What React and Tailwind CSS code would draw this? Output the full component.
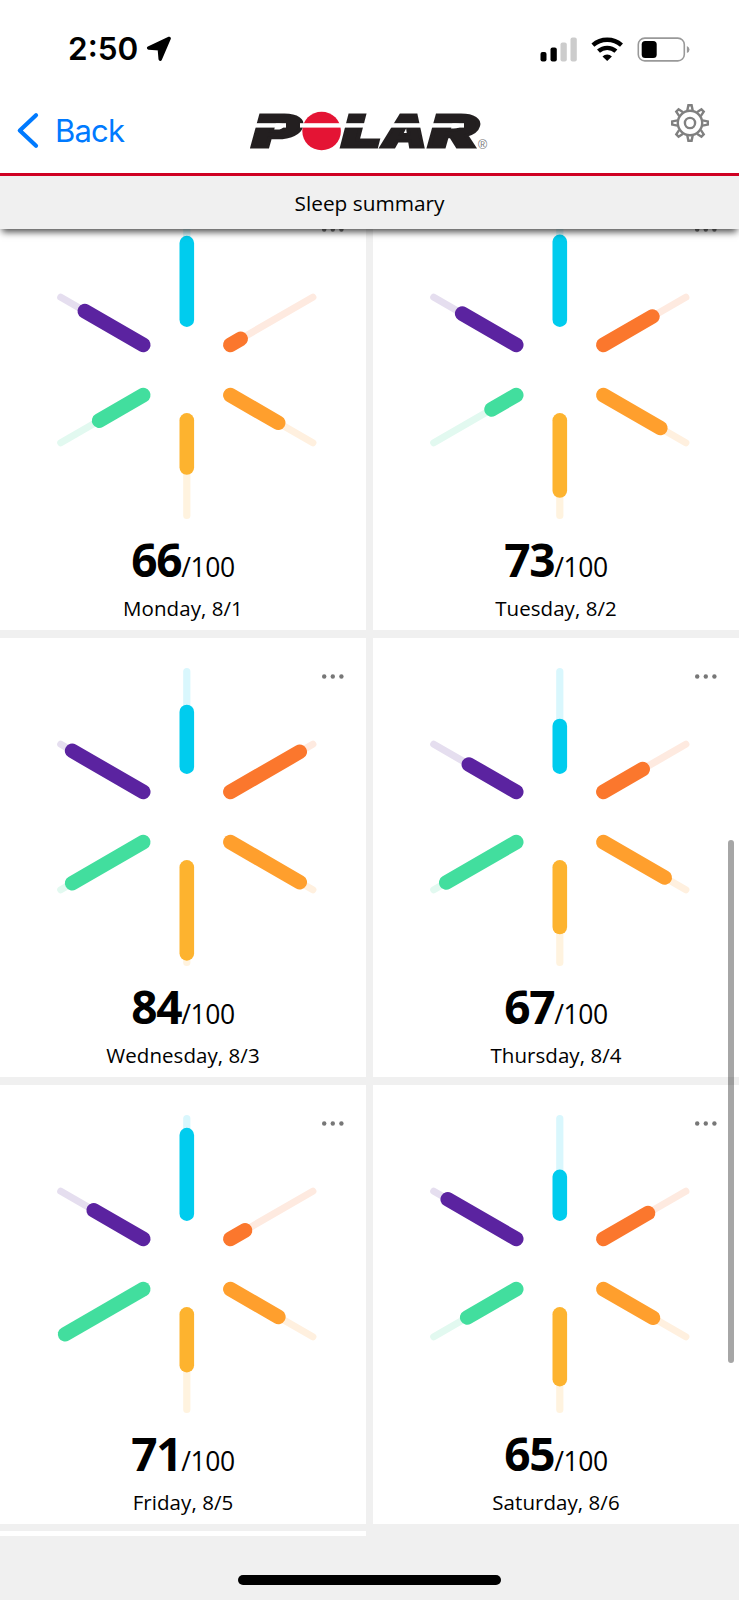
const SPOKES = [
  { angle: -90, color: "#00ccee", track: "#d9f7fd" },
  { angle: -30, color: "#fb772d", track: "#feeae0" },
  { angle: 30, color: "#ff9f2d", track: "#fff0df" },
  { angle: 90, color: "#fdb32f", track: "#fff3df" },
  { angle: 150, color: "#42de9e", track: "#e2f9f0" },
  { angle: 210, color: "#5b23a0", track: "#e5deef" },
];

// reach = how far each spoke is filled, clockwise from the top
const days = [
  { score: 66, label: "Monday, 8/1", reach: [126.9, 62.2, 105.5, 97.5, 101.2, 117.8] },
  { score: 73, label: "Tuesday, 8/2", reach: [128.2, 106.9, 116.1, 120.5, 78.8, 112.7] },
  { score: 84, label: "Wednesday, 8/3", reach: [105, 130.4, 130.4, 136.4, 132.4, 132.4] },
  { score: 67, label: "Thursday, 8/4", reach: [91, 95.7, 121.1, 110, 131.1, 105] },
  { score: 71, label: "Friday, 8/5", reach: [128.9, 67.3, 105.7, 101.2, 140.5, 107.5] },
  { score: 65, label: "Saturday, 8/6", reach: [87.2, 101.9, 107.6, 115.2, 106.9, 129.4] },
];

const SleepStar = ({ reach }) => (
  <svg className="block w-[366px] h-[337px]" viewBox="0 0 366 337">
    <g transform="translate(186.8 179)" strokeLinecap="round">
      {SPOKES.map((s, i) => (
        <g key={s.angle} transform={`rotate(${s.angle})`}>
          <line x1="60" x2={reach[i] > 140 ? 138 : 145.5} y1="0" y2="0" stroke={s.track} strokeWidth="7.2" />
          <line x1="50.3" x2={reach[i]} y1="0" y2="0" stroke={s.color} strokeWidth="14.6" />
        </g>
      ))}
    </g>
    <g fill="#777777">
      <circle cx="324.2" cy="38.5" r="2.2" />
      <circle cx="332.8" cy="38.5" r="2.2" />
      <circle cx="341.4" cy="38.5" r="2.2" />
    </g>
  </svg>
);

const DayCard = ({ day }) => (
  <div className="bg-white flex flex-col items-center overflow-hidden">
    <SleepStar reach={day.reach} />
    <div className="flex items-baseline h-[62px] leading-[62px] text-black">
      <span className="text-[46px] font-bold tracking-[-1.3px]">{day.score}</span>
      <span className="text-[26.5px] tracking-[-0.4px]">/100</span>
    </div>
    <div className="pt-[2px] text-[20.5px] leading-[32px] tracking-[0.06px] text-black">{day.label}</div>
  </div>
);

const StatusBar = () => (
  <div className="flex items-center justify-between h-[98px] pl-[68px] pr-[49px]">
    <div className="flex items-center gap-[8px] font-['Inter',sans-serif]">
      <span className="text-[31.5px] leading-[38px] font-semibold text-black">2:50</span>
      <svg className="w-[26px] h-[26px]" viewBox="0 0 26 26">
        <path d="M23.2 2.4 14.2 23.2 13.3 12.9 2.6 12Z" fill="#000" stroke="#000" strokeWidth="3.4" strokeLinejoin="round" />
      </svg>
    </div>
    <div className="flex items-center gap-[14px]">
      <svg className="w-[38px] h-[25px]" viewBox="0 0 38 25">
        <rect x="1.5" y="15" width="6" height="9.5" rx="2" fill="#000" />
        <rect x="11.5" y="10.5" width="6.3" height="14" rx="2" fill="#000" />
        <rect x="21.5" y="5.5" width="6.3" height="19" rx="2" fill="#ccc" />
        <rect x="31.5" y="0.5" width="6.3" height="24" rx="2" fill="#ccc" />
      </svg>
      <svg className="w-[32px] h-[25px]" viewBox="0 0 32 25" fill="none" stroke="#000" strokeWidth="4.4">
        <path d="M1.9 8.2Q8 2.8 16.2 2.8T30.5 8.2" />
        <path d="M7.5 14.2Q11.2 10.9 16.2 10.9T24.9 14.2" />
        <path d="M16.2 24.1 11.5 19.4Q13.4 17.4 16.2 17.4T20.9 19.4Z" fill="#000" stroke="none" />
      </svg>
      <svg className="w-[53px] h-[25px]" viewBox="0 0 53 25">
        <rect x="1.3" y="1.1" width="46" height="22.8" rx="6.5" fill="none" stroke="#999" strokeWidth="1.6" />
        <rect x="4.7" y="4" width="15" height="17" rx="3.5" fill="#000" />
        <path d="M49.9 8.9Q52.5 10 52.5 12.5T49.9 16.1Z" fill="#999" />
      </svg>
    </div>
  </div>
);

const PolarLogo = () => (
  <svg className="block w-[248px] h-[60px]" viewBox="246 101 248 60">
    <g fill="#231f20" stroke="#231f20" strokeWidth="2.8" className="font-['Inter',sans-serif] font-black italic" fontSize="44.5">
      <text x="252.5" y="146.7" textLength="48" lengthAdjust="spacingAndGlyphs">P</text>
      <text x="342" y="146.7" textLength="39" lengthAdjust="spacingAndGlyphs">L</text>
      <text x="382.5" y="146.7" textLength="44" lengthAdjust="spacingAndGlyphs">A</text>
      <text x="429" y="146.7" textLength="49" lengthAdjust="spacingAndGlyphs">R</text>
    </g>
    <circle cx="321.6" cy="131" r="19.3" fill="#e41434" />
    <g fill="#fff">
      <rect x="252" y="123.2" width="34" height="4.4" />
      <rect x="300" y="123.2" width="43" height="4.4" />
      <rect x="344" y="123.2" width="83" height="4.4" />
      <rect x="430" y="123.2" width="34" height="4.4" />
    </g>
    <text x="478" y="148.6" fontSize="12.5" fill="#777" className="font-['Liberation_Sans',sans-serif]">®</text>
  </svg>
);

const Gear = () => (
  <svg className="w-[40px] h-[40px]" viewBox="-20 -20 40 40" fill="none" stroke="#808080" strokeWidth="2.4">
    <circle r="12.2" />
    <circle r="5.1" />
    {[0, 45, 90, 135, 180, 225, 270, 315].map((a) => (
      <path key={a} transform={`rotate(${a})`} d="M-2.7-12.5-1.6-17.8H1.6L2.7-12.5" />
    ))}
  </svg>
);

const NavBar = () => (
  <div className="flex items-start justify-between h-[75px] pl-[16px] pr-[29px]">
    <button className="flex items-center gap-[15px] w-[230px] shrink-0 pt-[14px] text-[#007aff]">
      <svg className="w-[24px] h-[38px]" viewBox="0 0 24 38">
        <path d="M20 3.3 3.8 18.5 20 33.7" fill="none" stroke="currentColor" strokeWidth="4.2" strokeLinecap="round" strokeLinejoin="round" />
      </svg>
      <span className="font-['Inter',sans-serif] text-[31px] leading-[38px] tracking-[-0.8px]">Back</span>
    </button>
    <div className="grow pt-[3px]">
      <PolarLogo />
    </div>
    <div className="flex justify-end pt-[5px]">
      <Gear />
    </div>
  </div>
);

export default function App() {
  return (
    <div className="relative flex flex-col w-[739px] h-[1600px] overflow-hidden bg-[#f0f0f0] font-['Open_Sans',sans-serif]">
      <header className="relative z-10 h-[229px] shrink-0 bg-white shadow-[0_5px_7px_-2px_rgba(0,0,0,0.7)]">
        <StatusBar />
        <NavBar />
        <div className="h-[56px] border-t-[3px] border-[#cf0022] bg-[#f0f0f0] text-center text-[20.8px] leading-[54px] text-black">
          Sleep summary
        </div>
      </header>

      <main className="h-[1307px] shrink-0 overflow-hidden">
        <div className="-mt-[37.67px] grid grid-cols-[366px_366px] auto-rows-[439px] gap-x-[7px] gap-y-[7.67px]">
          {days.map((day) => (
            <DayCard key={day.label} day={day} />
          ))}
          <div className="bg-white" />
        </div>
      </main>

      <footer className="flex flex-1 justify-center pt-[39px]">
        <div className="w-[263px] h-[10px] rounded-full bg-black" />
      </footer>

      {/* Scroll indicator */}
      <div className="absolute z-20 right-[5px] top-[840px] w-[6px] h-[523px] rounded-full bg-black/35" />
    </div>
  );
}
